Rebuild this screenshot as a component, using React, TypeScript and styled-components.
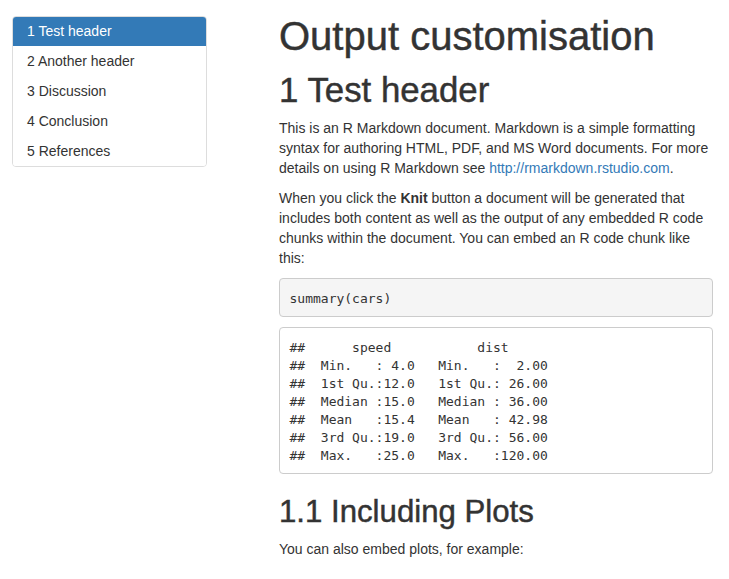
import React from "react";
import styled, { createGlobalStyle } from "styled-components";

const Global = createGlobalStyle`
  html, body { margin: 0; padding: 0; background: #fff; }
  body {
    font-family: "Liberation Sans", Arial, sans-serif;
    font-size: 14px;
    line-height: 20px;
    color: #333;
  }
  * { box-sizing: border-box; }
`;

const Page = styled.div`
  display: flex;
  align-items: flex-start;
  padding: 16px 0 0 12px;
`;

const Toc = styled.nav`
  width: 195px;
  border: 1px solid #ddd;
  border-radius: 4px;
  overflow: hidden;
  flex-shrink: 0;
`;

const TocItem = styled.a<{ $active?: boolean }>`
  display: block;
  height: 30px;
  line-height: 30px;
  padding: 0 14px;
  margin-top: ${(p) => (p.$active ? "-1px" : "0")};
  font-size: 14px;
  color: ${(p) => (p.$active ? "#fff" : "#333")};
  background: ${(p) => (p.$active ? "#337ab7" : "#fff")};
  text-decoration: none;
`;

const Main = styled.main`
  width: 434px;
  margin-left: 72px;
  margin-top: -2px;
`;

const Heading = `
  font-weight: 500;
  color: #333;
  -webkit-text-stroke: 0.45px #333;
`;

const Title = styled.h1`
  ${Heading}
  margin: 0 0 13px;
  font-size: 40px;
  line-height: 44px;
`;

const H2 = styled.h2`
  ${Heading}
  margin: 0 0 10px;
  font-size: 34.8px;
  line-height: 37px;
`;

const H3 = styled.h3`
  ${Heading}
  margin: 21px 0 10px;
  font-size: 31.2px;
  line-height: 34px;
`;

const P = styled.p`
  margin: 0 0 10px;
`;

const Link = styled.a`
  color: #337ab7;
  text-decoration: none;
`;

const Pre = styled.pre<{ $output?: boolean }>`
  margin: 0 0 10px;
  padding: 11px 9.5px 8.5px;
  font-family: "DejaVu Sans Mono", "Liberation Mono", monospace;
  font-size: 13px;
  line-height: 17.9px;
  color: #333;
  background: ${(p) => (p.$output ? "#fff" : "#f5f5f5")};
  border: 1px solid #ccc;
  border-radius: 4px;
  white-space: pre;
  overflow: hidden;
`;

const tocItems = [
  "1 Test header",
  "2 Another header",
  "3 Discussion",
  "4 Conclusion",
  "5 References",
];

const output = `##      speed           dist       
##  Min.   : 4.0   Min.   :  2.00  
##  1st Qu.:12.0   1st Qu.: 26.00  
##  Median :15.0   Median : 36.00  
##  Mean   :15.4   Mean   : 42.98  
##  3rd Qu.:19.0   3rd Qu.: 56.00  
##  Max.   :25.0   Max.   :120.00  `;

export default function App() {
  return (
    <>
      <Global />
      <Page>
        <Toc>
          {tocItems.map((t, i) => (
            <TocItem key={t} href="#" $active={i === 0}>
              {t}
            </TocItem>
          ))}
        </Toc>
        <Main>
          <Title>Output customisation</Title>
          <H2>1 Test header</H2>
          <P>
            This is an R Markdown document. Markdown is a simple formatting
            syntax for authoring HTML, PDF, and MS Word documents. For more
            details on using R Markdown see{" "}
            <Link href="#">http://rmarkdown.rstudio.com</Link>.
          </P>
          <P>
            When you click the <strong>Knit</strong> button a document will be
            generated that includes both content as well as the output of any
            embedded R code chunks within the document. You can embed an R code
            chunk like this:
          </P>
          <Pre>summary(cars)</Pre>
          <Pre $output>{output}</Pre>
          <H3>1.1 Including Plots</H3>
          <P>You can also embed plots, for example:</P>
        </Main>
      </Page>
    </>
  );
}
